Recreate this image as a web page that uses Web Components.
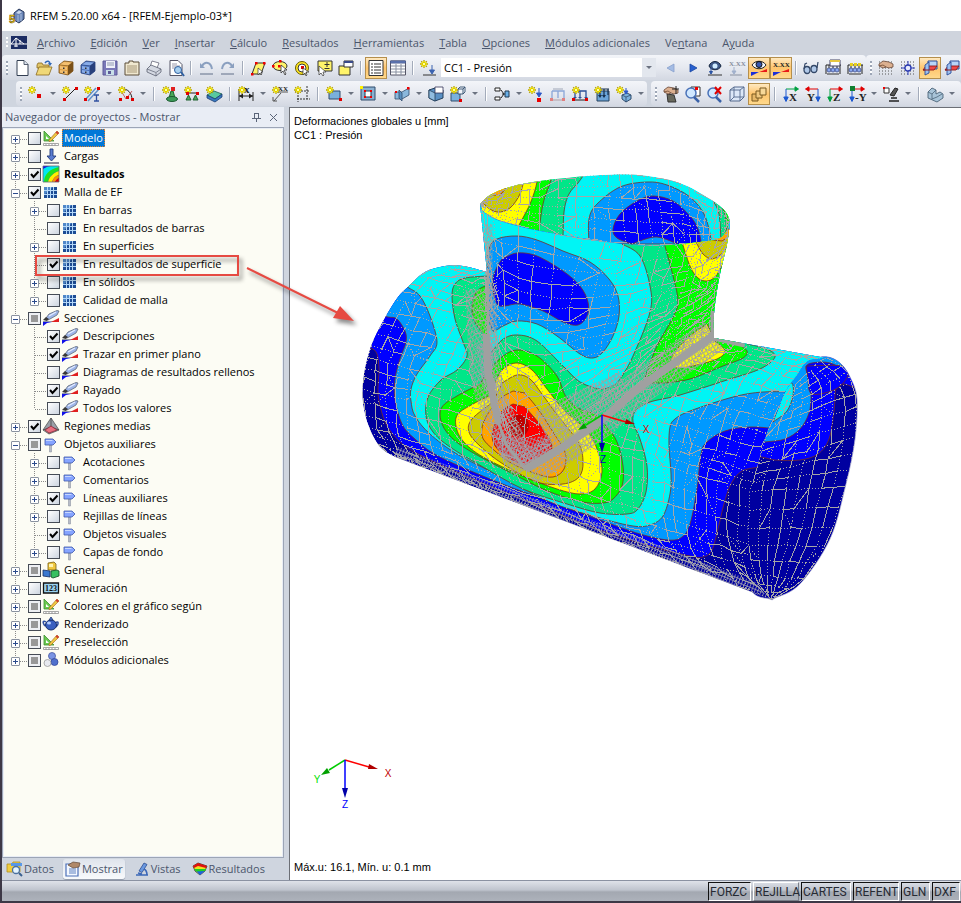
<!DOCTYPE html>
<html lang="es">
<head>
<meta charset="utf-8">
<title>RFEM 5.20.00 x64</title>
<style>
  html, body { margin: 0; min-height: 100vh; }
  body { display: flex; font: 11px/18px "Open Sans", "Noto Sans", sans-serif; color: #000; background: #3d3846; }
</style>
</head>
<body>
<rf-app></rf-app>
<script>
const define = (name, markup, ready) => {
  const tpl = document.createElement('template');
  tpl.innerHTML = markup;
  customElements.define(name, class extends HTMLElement {
    constructor() {
      super();
      this.attachShadow({ mode: 'open' }).append(tpl.content.cloneNode(true));
    }
    connectedCallback() {
      if (this.done) return;
      this.done = true;
      if (ready) ready(this, this.shadowRoot);
    }
  });
};

/* ---------- icons, drawn on a 16 x 16 field ---------- */
const p = (d, fill = 'none', stroke = 'none', w = 1) => `<path d="${d}" fill="${fill}" stroke="${stroke}" stroke-width="${w}"/>`;
const dot = (x, y, c = '#e00000', s = 3) => `<rect x="${x}" y="${y}" width="${s}" height="${s}" fill="${c}"/>`;
const star = p('M4 0v8M0 4h8M1.2 1.2l5.6 5.6M6.8 1.2L1.2 6.8', 'none', '#b8a400', 1.3) + p('M4 1v6M1 4h6M2 2l4 4M6 2L2 6', 'none', '#fff200', 1) + dot(3, 3, '#ffffa0', 2);
const word = (t, x, y, c, s = 7) => `<text x="${x}" y="${y}" fill="${c}" font-size="${s}" font-family="Liberation Serif, serif" font-weight="bold">${t}</text>`;
const hand = p('M1 4l4-3 6 1 4 2v3l-4 1-3-1-3 1-4-2z', '#dcb090', '#684838', .8) + p('M1 6l4-1 3 2', 'none', '#704830', .8);
const grid = (c = '#555') => p('M1 2h15M1 5h15M1 8h15M1 11h15M1 14h15', 'none', c, 1).replace('<path', '<path stroke-dasharray="1 2"');
const sqgrid = (a, b) => `<rect x="1" y="3" width="13" height="11" fill="${a}"/><path d="M1 3h9l-9 8z" fill="#5088c8"/>` + p('M4.5 3v11M7.5 3v11M10.5 3v11M1 6.5h13M1 10.5h13', 'none', b, 1);
const truss = () => p('M1 5h15M1 14V5M15 14V5', 'none', '#222', 1) + [3, 7, 11].map(i => `<circle cx="${i + 1}" cy="10" r="2" fill="#8aa8f0" stroke="#304080" stroke-width=".7"/>`).join('') + [3, 7, 11].map(i => p(`M${i + 1} 5v3M${i - 1} 14h4`, 'none', '#333')).join('');
const cabinet = (a, b, c) => p('M1 5l5-4 9 1v9l-5 4-9-2z', a, c, .8) + p('M1 5l9 1v9l5-4V2z', c) + p('M2 4.500L6 2l8 .500-4 3z', b) + p('M2 6l7 1v3l-7-1zM2 10l7 1v3l-7-1.500z', b) + dot(5, 7.5, '#333', 1.5) + dot(5, 11.5, '#333', 1.5);
const axes = (t, a, b) => p('M3 3h9M12 .8l3.500 2.200L12 5.200z', a, a, 1) + p('M3 3v9M.8 11L3 15.500 5.200 11z', b, b, 1) + word(t, 6, 15, '#222', 11);
const flag = p('M6.500 9h2v7h-2z', '#b8bcc8', '#808898', .5) + p('M2 3h8l3 3-3 3H2z', '#86a4ff', '#4058a8', .8) + p('M3 4h6l1 1H3z', '#c8d8ff');
const sect = p('M0 11.500h16', 'none', '#9098a8') + p('M16 8v4H8z', '#e02020') + p('M0 12h9l-5 1-4 3z', '#1010e8') + p('M3 8l3-4 8-3.500 2 .500-2 4-7 4-2 1z', '#9cb4e8', '#606878', .8) + p('M6 6l7-4', 'none', '#e4ecff', 1.2) + p('M0 10l3-3 3 2-2 2z', '#383838');
const edit = p('M1 1v10h10z', '#6ac850', '#3c9030', .8) + p('M3 6v3h3z', '#fff') + p('M6 10L14 1l2 2-8 8-2 .5z', '#f0c840', '#a06020', .6) + p('M14 1l2 2-1.500 1.500-2-2z', '#d04030') + p('M.500 13.500h15v2h-15z', '#fff', '#909090', .8) + p('M3 14v2M6 14v2M9 14v2M12 14v2', 'none', '#999', 1);
const planes = p('M6 1h9v8H6z', '#b8d4f8', '#2a4c98') + p('M1 10l3-4h11l-3 4z', '#f04848', '#901818', .9) + p('M3 5l4-3v11l-4 2z', '#9cc0f0', '#2a4c98', .9) + p('M1 10h6', 'none', '#901818');

const ICONS = {
  app: p('M5 5l5-4 5 3v7l-5 4-5-3z', '#6a86b8', '#26375c', 1) + p('M7 5l3-2.500 3 1.500-3 2z', '#c8d4ea') + p('M9 7v7M12 6v7', 'none', '#a8bcdc', 1) + `<text x="0" y="15" font-size="11" font-weight="bold" font-family="Liberation Sans" fill="#ffd21c" stroke="#5a4800" stroke-width=".5">5</text>`,
  bridge: p('M0 1h16v13H0z', '#1c2c62') + p('M0 9h16M5 3v9M5 3L0 9M5 3l8 6M9 5v4M3 11h4', 'none', '#fff', 1),
  new: p('M3 .500h7l4 4v11H3z', '#fff', '#333f52') + p('M10 .500v4h4', '#dce4f0', '#333f52', .8),
  open: p('M1 5l1-2h4l1 2h6v3H1z', '#e0c468', '#8a6a20', .8) + p('M0 15l3-8h13l-3 8z', '#f0d878', '#8a6a20', .8) + p('M9 3c2-3 5-2 5 1', 'none', '#3068b8', 1.5) + p('M12 3h4l-2 3z', '#3068b8'),
  boxb: cabinet('#d89a40', '#f4c070', '#7a5018'), boxs: cabinet('#4870b8', '#88ace8', '#28407c'),
  save: p('M1 1h14v14H1z', '#7a78b8', '#5c5a98') + p('M4 1h9v7H4z', '#f0f2fa') + p('M5 3h7M5 5h7', 'none', '#9098b0') + p('M4 10h8v5H4z', '#c8e0e8') + dot(6, 11, '#5c5a98', 3),
  report: p('M1 3h4V1h4v1h6v13H1z', '#f0e8d0', '#5a4c38') + p('M3 6h10M3 8h10M3 10h10M3 12h10', 'none', '#a89878'),
  print: p('M4 7l2-6 7 2-2 5z', '#fff', '#667', .8) + p('M1 9l4-4 10 4v3l-5 4-9-4z', '#d4d8e2', '#5a6070', .8) + p('M1 9l9 3.500L15 9M10 13v3', 'none', '#5a6070', .7),
  preview: p('M2 .500h8l4 4v11H2z', '#fff', '#556') + p('M4 4h5M4 6h8M4 8h4', 'none', '#99a') + `<circle cx="10" cy="10" r="3.500" fill="#a8d0f0" stroke="#3060a0"/>` + p('M13 12l3 4', 'none', '#3060a0', 2),
  undo: p('M2 3v5h5z', '#8ba0c0') + p('M4 6c3-5 9-4 10 3', 'none', '#8ba0c0', 2) + p('M2 14h13', 'none', '#8a94a8', 1.5),
  redo: p('M14 3v5H9z', '#8ba0c0') + p('M12 6C9 1 3 2 2 9', 'none', '#8ba0c0', 2) + p('M1 14h13', 'none', '#8a94a8', 1.5),
  sel1: p('M2 14L6 3h9l-4 11z', '#fff46a', '#333') + dot(1, 13, '#e00', 2.5) + dot(5, 2, '#e00', 2.5) + dot(13, 2, '#e00', 2.5) + p('M8 8v7l2-2 1 2 1-1-1-2h2z', '#fff', '#333', .7),
  sel2: `<ellipse cx="8" cy="6" rx="7" ry="4.500" fill="#fff46a" stroke="#333"/>` + p('M9 5v8l2-2 2 4 1-1-2-4h3z', '#fff', '#333', .8) + dot(7, 0, '#e00', 2.5) + dot(0, 5, '#e00', 2.5) + dot(6, 5, '#e00', 2.5),
  sel3: `<circle cx="8" cy="8" r="6.500" fill="#ffe820" stroke="#6a5c00"/><circle cx="8" cy="8" r="4" fill="#fff" stroke="#333"/>` + dot(7, 6) + p('M9 8v7l2-2 1 3 1-1-1-3h3z', '#fff', '#333', .7),
  sel4: p('M2 1h14v10H2z', '#fff46a', '#333') + p('M11 2v5M8.500 4.500h5M8.500 8.500h5', 'none', '#333') + p('M3 6v9l2-2 2 3 1-1-1-3h3z', '#fff', '#333', .7),
  sel5: p('M1 6h11v9H1z', '#fff46a', '#333') + p('M6 1h9v6H6z', '#fff', '#333') + p('M6 1h9v2H6z', '#3a4a8a'),
  list: p('M1 .500h14v15H1z', '#fff', '#333') + p('M6 4h7M6 7h7M6 10h7M6 13h7', 'none', '#333') + p('M3 4h2M3 7h2M3 10h2M3 13h2', 'none', '#333'),
  table: p('M.500 1h15v14H.500z', '#fff', '#556') + p('M.500 1h15v2H.500z', '#6a86c8', '#4a5c90') + p('M1 6h14M1 9h14M1 12h14M6 4v11M11 4v11', 'none', '#8890a0'),
  newload: star + p('M12 5v6M9.500 10l2.500 4 2.500-4z', '#3a62b0', '#3a62b0') + p('M3 15h13', 'none', '#333'),
  prev: p('M11 4v8L4 8z', '#a4bce4', '#88a0cc', .8), next: p('M5 4v8l7-4z', '#2860d0', '#1c48a0', .8),
  eyeload: p('M2 6c2-6 10-6 12 0-2 5-10 5-12 0z', '#3c5888', '#14243c') + `<circle cx="8" cy="6" r="2.500" fill="#d0ecff"/>` + p('M4 8v5M2.500 11.500L4 14l1.500-2.500z', '#3a72d0', '#2850a0') + p('M1 15h14', 'none', '#333'),
  xxload: word('X.XX', 0, 6, '#8890a0', 7) + p('M5 7v5M3 11l2 3 2-3z', '#a0b0cc', '#a0b0cc') + p('M1 15h12', 'none', '#8890a0'),
  eyeres: p('M1 5c3-5 11-5 14 0-3 5-11 5-14 0z', '#f4f8ff', '#222', 1) + `<circle cx="8" cy="4.500" r="3" fill="#3858b0" stroke="#111"/>` + p('M0 16V12l8 0z', '#1c30d8') + p('M8 12l8-3v3z', '#e81818'),
  xxres: word('X.XX', 0, 7, '#222', 7) + p('M0 16V12l8 0z', '#1c30d8') + p('M8 12l8-3v3z', '#e81818'),
  glasses: `<ellipse cx="4" cy="10" rx="3" ry="3.500" fill="#b0c8e8" stroke="#344868" stroke-width="1.300"/><ellipse cx="11" cy="9" rx="3" ry="3.500" fill="#b0c8e8" stroke="#344868" stroke-width="1.300"/>` + p('M1 9L2 4l2-1M14 8l1-6', 'none', '#344868', 1.2),
  tr1: truss() + p('M5 0h10v6H5z', '#fff', '#446') + p('M5 0h10v2H5z', '#e8c840'),
  tr2: truss() + dot(3, 3, '#e8d020', 3) + dot(7, 3, '#e8d020', 3) + dot(11, 3, '#e8d020', 3),
  gridhand: grid() + hand, gridpt: grid() + p('M8 1v14M1 8h14', 'none', '#3040c0') + `<circle cx="8" cy="8" r="3" fill="#e8ecff" stroke="#2838b0" stroke-width="1.300"/>`,
  plane: planes,
  node: star + dot(9, 8, '#e00000', 4),
  line: star + p('M2 14L14 2', 'none', '#222') + dot(1, 12) + dot(13, 1),
  member: p('M1 14L12 2M4 15L15 3', 'none', '#6090c8', 1.5) + star + p('M10 9h5M12.500 9v6M10 15h5', 'none', '#3050a0', 1.3) + dot(0, 12) + dot(13, 1),
  arc: p('M2 3c8-1 12 4 12 11', 'none', '#222') + p('M2 3L8 13M8 13l6-8', 'none', '#c04040', .8) + star + dot(1, 12) + dot(8, 10) + dot(13, 12),
  sup1: p('M7 12l2-7h2l2 7z', '#48a858', '#206030') + `<ellipse cx="10" cy="13" rx="5.500" ry="2.500" fill="#3c9a58" stroke="#1c5c30"/>` + star + dot(9, 1, '#e02020', 4),
  sup2: p('M2 7h13', 'none', '#222') + p('M2 14l2.500-5L7 14zM9 14l2.500-5 2.500 5z', '#48a858', '#206030') + star + dot(2, 6) + dot(12, 6),
  sup3: p('M1 9l7-4 8 3-7 5z', '#58c8a0', '#206050', .8) + p('M1 9l8 4 7-5v3l-7 5-8-4z', '#3878c0', '#1c3c70', .8) + star,
  dim: p('M1 3v12M15 6v9M1 10h14', 'none', '#222') + p('M1 10l4-2.500v5zM15 10l-4-2.500v5z', '#222') + word('x', 6, 7, '#222', 11) + star,
  dimxx: word('XX', 6, 5, '#222', 7) + p('M5 6h11M2 15L9 7M1 11v4h4', 'none', '#555') + star,
  frame: p('M4 3v13M13 0v13M1 5h14M3 13h13', 'none', '#333').replace('<path', '<path stroke-dasharray="2 1"') + star,
  surf: p('M3 5h11v8H3z', '#7ab0dc', '#304c6c') + star + dot(13, 12),
  opening: p('M1 1h14v13H1z', '#8ab0d0', '#304c6c') + p('M5 5h6v6H5z', '#fff', '#203850') + dot(4, 4, '#e00', 2) + dot(10, 4, '#e00', 2) + dot(4, 10, '#e00', 2) + dot(10, 10, '#e00', 2) + dot(0, 0, '#fff200', 3),
  inter: p('M1 6h7l7-4v7l-7 4H1z', '#8ab8dc', '#304c6c', .8) + p('M5 4v8l3 3V7z', '#5a90c0', '#304c6c', .8) + dot(13, 1, '#e00', 2.5) + dot(1, 5, '#e00', 2),
  solid: p('M1 4l6-2 8 2v8l-8 3-6-3z', '#5a90c4', '#24405c') + p('M1 4l6 3v8l-6-3z', '#90bce0', '#24405c', .8) + p('M7 1h8v6H7z', '#fff', '#335', .8),
  solids: p('M1 7h9v8H1z', '#7ab0dc', '#304c6c') + p('M8 3l2-2h5v5l-2 2H8zM8 3h5v5M13 3l2-2', '#f0f4fa', '#304c6c', .9) + star + dot(9, 13),
  conn: p('M1 2h5v3H1zM1 11h5v3H1z', '#fff', '#222') + p('M7 4l3 4-3 4M8 8h3', 'none', '#222') + p('M11 5h4v6h-4z', '#6ab0e8', '#203850'),
  pload: star + p('M11 2v7M8.500 7l2.500 4 2.500-4z', '#2c58c8', '#2c58c8') + dot(9, 12, '#e00', 4),
  lload1: p('M2 5h12v7M2 5v7M8 5v7', 'none', '#8aa6d8', 1.3) + p('M1 14h14', 'none', '#b0a0a8') + p('M3 3h10', 'none', '#a0a8b8') + dot(0, 12, '#e08080', 3) + dot(12, 12, '#e08080', 3),
  lload2: p('M3 5h11v6M3 5v6M8 5v6', 'none', '#2c5098', 1.3) + p('M1 11h4l-2 2zM6 11h4l-2 2zM12 11h4l-2 2z', '#2c5098') + p('M1 14h14', 'none', '#222') + star + dot(0, 12) + dot(13, 12),
  sload: p('M3 5h12v10H3z', '#6aa4d8', '#24405c') + p('M6 3v6M10 3v6M14 3v6M4 3h11', 'none', '#16304c', 1.2) + p('M4 9h4l-2 3zM8 9h4l-2 3z', '#16304c') + star,
  vload: p('M6 9l5-2 4 2v4l-5 3-4-3z', '#7ab0dc', '#304c6c') + p('M6 9l4 2 5-2M10 11v5', 'none', '#304c6c', .8) + p('M10 2v5M8 5l2 3 2-3z', '#2c58c8', '#2c58c8') + star,
  pan: p('M4 8l7 1 2 7H5z', '#68685c', '#333') + hand + p('M13 0v8M9 3h7', 'none', '#222'),
  zoomw: p('M6 1h9v9H6z', '#fff', '#333') + `<circle cx="6" cy="7" r="5" fill="#d0e8ff" stroke="#4a72b8" stroke-width="1.500"/>` + p('M9 11l5 5', 'none', '#3a62a8', 2.5) + dot(10, 1, '#e00', 3),
  zoomx: `<circle cx="6" cy="7" r="5" fill="#d0e8ff" stroke="#4a72b8" stroke-width="1.500"/>` + p('M9 11l5 5', 'none', '#3a62a8', 2.5) + p('M8 1l6 7M14 1L8 8', 'none', '#e00000', 2),
  cube: p('M1 4l4-3h10v10l-4 4H1z', '#dce8f8', '#54698c') + p('M1 4h10v11M11 4l4-3M5 1v10h10M5 11l-4 4', 'none', '#54698c', .9),
  boxes: p('M1 8h6v7H1z', '#e8b868', '#7a5a20') + p('M5 5h6v7H5z', '#f0c880', '#7a5a20') + p('M9 2h6v7H9z', '#f8d898', '#7a5a20'),
  axx: axes('X', '#00a040', '#1c58d0'), axy: p('M13 3H4M4 .8L.500 3 4 5.200z', '#e00000', '#e00000') + p('M13 3v9M10.800 11l2.200 4.500 2.200-4.500z', '#1c58d0', '#1c58d0') + word('Y', 2, 15, '#222', 11),
  axz: axes('Z', '#e00000', '#00a040'), axmy: axes('-Y', '#e00000', '#1c58d0') + dot(1, 0, '#108030', 5),
  views: p('M1 2h5v5H1z', '#fff', '#333') + p('M7 9L12 2l3 1-4 7z', '#555', '#222') + p('M6 15h10M8 12h6', 'none', '#222', 1.6) + dot(0, 1, '#e00', 2),
  lsolid: p('M1 6l4-4 4 2v4l4-2 3 2v4l-6 4-9-4z', '#a8c4d8', '#4c6478', .9) + p('M1 6l4 2v5M5 8l4-4M5 13l5-2 5-3', 'none', '#4c6478', .8),
  edit, sect, flag,
  load: p('M7 1h3v7h3l-4.500 5L4 8h3z', '#5a7cd0', '#223a78', .9) + p('M1 15h15', 'none', '#667', 1.5),
  result: p('M0 0h16v16H0z', '#1010f0') + p('M0 16V3C3 1 6 0 8 0h8v4C10 6 6 10 4 16z', '#00e8f0') + p('M1 16C1 9 6 3 16 1v4C10 7 6 11 5 16z', '#20e020') + p('M5 16C6 11 10 7 16 5v4c-4 1-6 4-7 7z', '#fff000') + p('M9 16c1-3 3-6 7-7v3c-2 1-3 2-4 4z', '#ff9000') + p('M12 16c1-2 2-3 4-4v4z', '#e00000') + p('M0 0h16v16H0z', 'none', '#667', .8),
  mesh: sqgrid('#1c4c94', '#b4d8f8'),
  region: p('M8 0L0 12l6 4 10-4z', '#9aa0a8', '#555', .8) + p('M8 0v9l-8 3M8 9l8 3', 'none', '#444', .8) + p('M2 12l6-4 6 4-8 3z', '#e87080', '#902838', .8),
  general: p('M5 1l6-1 2 2v6H5z', '#f0c840', '#7a6010', .8) + p('M6 2h4v3H6z', '#fff4b0') + p('M8 9l6-1 2 1v5l-6 2-2-1z', '#38c060', '#104820', .8) + p('M0 8l7 1v6l-7-1z', '#3a78d0', '#142c60', .8),
  num: p('M.500 3h15v10H.500z', '#9cd4f0', '#111', 1.3) + word('123', 2, 11, '#111', 8),
  pot: p('M3 6c-3-2-4 0-1 4M12 7c4-3 4 1 1 4', 'none', '#3050a0', 1.5) + `<ellipse cx="8" cy="9" rx="5.500" ry="5" fill="#3a60c0" stroke="#18306c"/><ellipse cx="6" cy="7" rx="2" ry="1.500" fill="#b8d0ff"/>` + p('M6 4h4L8 1z', '#5880d8', '#18306c', .8),
  mods: `<circle cx="9" cy="4" r="3.500" fill="#7a94e4" stroke="#4858a0" stroke-width=".8"/><circle cx="11.500" cy="10" r="3.500" fill="#5070cc" stroke="#34489c" stroke-width=".8"/><circle cx="4.500" cy="11" r="3.500" fill="#e8eaf0" stroke="#999" stroke-width=".8"/>`,
  tdata: p('M0 3h5l1-2h7v10H0z', '#f0cc40', '#b09020', .8) + p('M4 2h11v3H4z', '#5898e8') + `<circle cx="9" cy="9" r="3.500" fill="#e4f4ff" stroke="#4a70a0" stroke-width="1.300"/>` + p('M12 12l3 3', 'none', '#3a6090', 2),
  tshow: p('M1 3h12v12H1z', '#f4f8ff', '#4c70b8', 1.2) + p('M4 8h7M4 10h7M4 12h7', 'none', '#5c80c0') + p('M3 4l5-3 7 1-1 4-6 1z', '#b08868', '#604838', .7),
  tview: p('M5 10L10 2l3 1.500-5 8z', '#6a98e0', '#2c4c90', .8) + p('M2 14h12M13 14c0-3-1-5-3-6M4 12l4 1', 'none', '#3c68b8', 1.6),
  tres: p('M1 5l5-3 9 3-2 5-5 4-5-4z', '#f0e020', '#333', .8) + p('M1 5l5-3 9 3-1 2-8-2-4 2z', '#e01010') + p('M3 9l10 1-5 4z', '#2060e0') + p('M2 8l12 0-1 2-9 .500z', '#20d020')
};

define('rf-icon', `<style>:host{display:block;flex:none;width:16px;height:16px}svg{display:block;width:100%;height:100%;overflow:visible}</style><svg viewBox="0 0 16 16" aria-hidden="true"></svg>`,
  (el, root) => { root.querySelector('svg').innerHTML = ICONS[el.getAttribute('name')] || ''; });

/* ---------- title, menus, toolbars ---------- */
define('rf-titlebar', `<style>
  :host{display:flex;align-items:center;gap:5px;height:31px;padding:0 7px;background:#fff}
</style><rf-icon name="app"></rf-icon><span><slot></slot></span>`);

define('rf-menubar', `<style>
  :host{display:flex;align-items:center;height:24px;background:#cfd4dd;padding-left:4px}
  nav{display:flex;gap:15px;margin-left:10px}
  i{width:2px;height:12px;margin-right:3px;background:repeating-linear-gradient(#fff 0 2px,transparent 2px 4px)}
  button{border:0;background:none;padding:0;font:inherit;color:#4b566c;white-space:nowrap}
</style><i></i><rf-icon name="bridge"></rf-icon><nav></nav>`, (el, root) => {
  root.querySelector('nav').innerHTML = ['_Archivo', '_Edición', '_Ver', '_Insertar', '_Cálculo', '_Resultados', '_Herramientas', '_Tabla', '_Opciones', '_Módulos adicionales', 'Ve_ntana', 'A_yuda']
    .map(t => `<button type="button">${t.replace(/_(.)/, '<u>$1</u>')}</button>`).join('');
});

define('rf-tool', `<style>
  :host{display:block;flex:none}
  button{display:flex;align-items:center;justify-content:center;box-sizing:border-box;width:22px;height:22px;border:1px solid transparent;padding:0;background:none}
  :host([active]) button{border-color:#b58f4c;background:linear-gradient(#ffe9c0,#ffc46c 50%,#ffd98c)}
</style><button type="button"></button>`, (el, root) => {
  const name = el.getAttribute('icon'), b = root.querySelector('button');
  b.innerHTML = `<rf-icon name="${name}"></rf-icon>`;
  b.setAttribute('aria-label', name);
  b.setAttribute('aria-pressed', el.hasAttribute('active'));
});

define('rf-toolbar', `<style>
  :host{display:flex;align-items:center;flex:none;height:25px;box-sizing:border-box;padding:0 0 0 4px;border-radius:4px;background:linear-gradient(#f3f5f9,#e6e9f0 50%,#d3d8e2)}
  :host([last]){flex:1 0 auto}
  .grip{flex:none;width:2px;height:14px;margin-right:3px;background:repeating-linear-gradient(#9da6b6 0 2px,#fff 2px 4px)}
  .sep{flex:none;width:1px;height:14px;margin:0 4px 0 3px;background:#a3abba;box-shadow:1px 0 #fff}
  :host([wide]) .sep{margin:0 5px 0 4px}
  .drop{flex:none;border:0;padding:0;background:none;width:12px;height:22px;display:flex;align-items:center;justify-content:center}
  .drop::before,.combo::after{content:"";border:3px solid transparent;border-top-color:#6b7280;border-bottom:0}
  .combo{display:flex;align-items:center;width:215px;height:19px;margin:0 4px 0 2px;background:#fff;position:relative}
  .combo::after{position:absolute;right:4px}
  .combo::before{content:"";position:absolute;right:0;width:14px;height:19px;background:#e3e7ee}
  select{appearance:none;border:0;background:transparent;width:100%;padding:0 16px 0 3px;font:inherit;color:#000;position:relative;z-index:1}
</style><span class="grip"></span>`, (el, root) => {
  root.innerHTML += el.getAttribute('items').split(' ').map(n =>
    n === '|' ? '<span class="sep"></span>' :
    n === 'v' ? '<button type="button" class="drop" aria-label="Más"></button>' :
    n === 'combo' ? '<span class="combo"><select aria-label="Caso de carga"><option>CC1 - Presión</option></select></span>' :
    `<rf-tool icon="${n.replace('*', '')}"${n.endsWith('*') ? ' active' : ''}></rf-tool>`).join('');
});

/* ---------- navigator ---------- */
define('rf-tree-item', `<style>
  :host{display:flex;height:18px;align-items:center;white-space:nowrap}
  .guide{flex:none;align-self:stretch;width:19px;position:relative}
  .v::before{content:"";position:absolute;left:6px;top:0;bottom:0;width:1px;background:repeating-linear-gradient(#8a8a8a 0 1px,transparent 1px 2px)}
  .first::before{top:9px}.end::before{bottom:8px}
  .h::after{content:"";position:absolute;left:7px;right:1px;top:10px;height:1px;background:repeating-linear-gradient(90deg,#8a8a8a 0 1px,transparent 1px 2px)}
  .exp{position:absolute;z-index:1;left:2px;top:6px;width:9px;height:9px;box-sizing:border-box;border:1px solid #8a92a0;border-radius:1px;padding:0;background:linear-gradient(90deg,#2b4a8c,#2b4a8c) 1px 3px/5px 1px no-repeat,#fff}
  .plus{background:linear-gradient(#2b4a8c,#2b4a8c) 3px 1px/1px 5px no-repeat,linear-gradient(#2b4a8c,#2b4a8c) 1px 3px/5px 1px no-repeat,#fff}
  input{appearance:none;flex:none;box-sizing:border-box;width:13px;height:13px;margin:0 2px 0 0;border:1px solid #464c56;background:linear-gradient(135deg,#fff,#cdd5e0)}
  input:checked{background:url("data:image/svg+xml,%3Csvg xmlns='http://www.w3.org/2000/svg' viewBox='0 0 11 11'%3E%3Cpath d='M2 5l2.500 3L9.500 2.500' fill='none' stroke='black' stroke-width='2'/%3E%3C/svg%3E"),linear-gradient(135deg,#fff,#cdd5e0)}
  input:indeterminate{background:linear-gradient(#989898,#989898) center/7px 7px no-repeat,#eef0f4}
  label{display:flex;align-items:center;gap:3px}
  label span{padding:0 2px;line-height:18px}
  :host([selected]) label span{background:#0078d7;color:#fff;outline:1px dotted #e08030;outline-offset:-1px}
  :host([bold]) label span{font-weight:bold}
</style>`, (el, root) => {
  const a = n => el.getAttribute(n), lvl = +a('level');
  const own = `guide h v${el.hasAttribute('first') ? ' first' : ''}${el.hasAttribute('end') ? ' end' : ''}`;
  root.innerHTML += (lvl ? '<span class="guide v"></span>' : '') +
    `<span class="${own}">${a('exp') ? `<button type="button" aria-label="Expandir" class="exp ${a('exp') === '+' ? 'plus' : ''}"></button>` : ''}</span>` +
    `<input type="checkbox" id="c"><label for="c"><rf-icon name="${a('icon')}"></rf-icon><span><slot></slot></span></label>`;
  const c = root.querySelector('input');
  c.checked = a('state') === 'x';
  c.indeterminate = a('state') === 'm';
});

define('rf-tree', `<style>:host{display:block;flex:1;padding:1px 6px;overflow:hidden;background:#fcfcf4;border:1px solid #9ca5b6;box-shadow:inset 0 0 0 1px #e9edf5}</style>`, (el, root) => {
  const rows = [
    ['0', '+', '', 'edit', 'Modelo', 'selected first'], ['0', '+', '', 'load', 'Cargas'], ['0', '+', 'x', 'result', 'Resultados', 'bold'], ['0', '-', 'x', 'mesh', 'Malla de EF'],
    ['1', '+', '', 'mesh', 'En barras'], ['1', '', '', 'mesh', 'En resultados de barras'], ['1', '+', '', 'mesh', 'En superficies'], ['1', '', 'x', 'mesh', 'En resultados de superficie'], ['1', '+', '', 'mesh', 'En sólidos'], ['1', '+', '', 'mesh', 'Calidad de malla', 'end'],
    ['0', '-', 'm', 'sect', 'Secciones'], ['1', '', 'x', 'sect', 'Descripciones'], ['1', '', 'x', 'sect', 'Trazar en primer plano'], ['1', '', '', 'sect', 'Diagramas de resultados rellenos'], ['1', '', 'x', 'sect', 'Rayado'], ['1', '', '', 'sect', 'Todos los valores', 'end'],
    ['0', '+', 'x', 'region', 'Regiones medias'], ['0', '-', 'm', 'flag', 'Objetos auxiliares'],
    ['1', '+', '', 'flag', 'Acotaciones'], ['1', '+', '', 'flag', 'Comentarios'], ['1', '+', 'x', 'flag', 'Líneas auxiliares'], ['1', '+', '', 'flag', 'Rejillas de líneas'], ['1', '', 'x', 'flag', 'Objetos visuales'], ['1', '+', '', 'flag', 'Capas de fondo', 'end'],
    ['0', '+', 'm', 'general', 'General'], ['0', '+', '', 'num', 'Numeración'], ['0', '+', 'm', 'edit', 'Colores en el gráfico según'], ['0', '+', 'm', 'pot', 'Renderizado'], ['0', '+', 'm', 'edit', 'Preselección'], ['0', '+', 'm', 'mods', 'Módulos adicionales', 'end']
  ];
  root.innerHTML += rows.map(([l, e, s, i, t, f = '']) => `<rf-tree-item level="${l}" exp="${e}" state="${s}" icon="${i}" ${f}>${t}</rf-tree-item>`).join('');
});

define('rf-navigator', `<style>
  :host{display:flex;flex-direction:column;flex:none;box-sizing:border-box;width:282px;background:#cfd5df}
  header{display:flex;align-items:center;height:20px;padding:0 2px 0 3px;background:#e9edf5;color:#4b566c}
  header span{flex:1}
  header button{border:0;background:none;padding:0;width:17px;height:16px;display:flex;align-items:center;justify-content:center}
  nav{display:flex;align-items:center;height:22px;padding:0 3px;gap:7px}
  nav button{display:flex;align-items:center;gap:1px;height:20px;border:0;border-radius:3px;padding:0 2px;background:none;font:inherit;color:#4b566c}
  nav button.on{background:linear-gradient(#dfe4ec,#f8fafc);box-shadow:0 1px 1px #8f98a8}
</style>
<header><span>Navegador de proyectos - Mostrar</span>
<button type="button" aria-label="Fijar"><svg width="9" height="9"><path d="M2.500 0v5M6.500 0v5M2 .500h5M0 5.500h9M4.500 6v3" fill="none" stroke="#5a6478"/></svg></button>
<button type="button" aria-label="Cerrar"><svg width="9" height="9"><path d="M1 1l7 7M8 1L1 8" stroke="#5a6478"/></svg></button></header>
<rf-tree></rf-tree>
<nav><button type="button"><rf-icon name="tdata"></rf-icon>Datos</button><button type="button" class="on"><rf-icon name="tshow"></rf-icon>Mostrar</button><button type="button"><rf-icon name="tview"></rf-icon>Vistas</button><button type="button"><rf-icon name="tres"></rf-icon>Resultados</button></nav>`);

/* ---------- model view ---------- */
const C = { navy: '#0000a0', blue: '#0000ff', light: '#0099ff', cyan: '#00f5f5', teal: '#00e688', green: '#00ff00', yellow: '#ffff00', olive: '#cccc00', orange: '#ffa500', red: '#ff0000', dark: '#c00000' };
const pts = s => s.trim().split(/\s+/).map(q => q.split(',').map(Number));
/* smooth curve through the points; "|" separates runs joined by straight corners */
const curve = s => {
  let d = '';
  s.split('|').forEach((run, k) => {
    const a = pts(run);
    d += (k ? 'L' : 'M') + a[0];
    for (let i = 0; i < a.length - 1; i++) {
      const p0 = a[i - 1] || a[i], p1 = a[i], p2 = a[i + 1], p3 = a[i + 2] || p2;
      const f = (u, v, w, sgn) => (u + sgn * (w - v) / 6).toFixed(1);
      d += `C${f(p1[0], p0[0], p2[0], 1)},${f(p1[1], p0[1], p2[1], 1)} ${f(p2[0], p1[0], p3[0], -1)},${f(p2[1], p1[1], p3[1], -1)} ${p2}`;
    }
  });
  return d + 'Z';
};
const area = (c, s) => `<path d="${curve(s)}" fill="${C[c]}" stroke="#7a2c20" stroke-width=".8"/>`;
const at = (a, t) => {
  const n = a.length - 1, i = Math.min(n - 1, Math.floor(t * n)), f = t * n - i;
  return [a[i][0] + (a[i + 1][0] - a[i][0]) * f, a[i][1] + (a[i + 1][1] - a[i][1]) * f];
};
let seed = 7;
const rnd = () => (seed = (seed * 16807) % 2147483647) / 2147483647 - .5;
/* finite-element grid between two profile curves; part of the edges are dotted */
const net = (A, B, nu, nv, jit, diag, bend = 1) => {
  const a = pts(A), b = pts(B), g = [];
  for (let i = 0; i <= nu; i++) {
    g.push([]);
    const s = Math.pow(i / nu, bend);
    for (let j = 0; j <= nv; j++) {
      const p1 = at(a, j / nv), p2 = at(b, j / nv);
      g[i].push([(p1[0] + (p2[0] - p1[0]) * s + rnd() * jit).toFixed(1), (p1[1] + (p2[1] - p1[1]) * s + rnd() * jit).toFixed(1)]);
    }
  }
  const d = ['', ''];
  const put = (u, v) => { d[rnd() > -.05 ? 1 : 0] += `M${u}L${v}`; };
  for (let i = 0; i <= nu; i++) for (let j = 0; j <= nv; j++) {
    if (i < nu) put(g[i][j], g[i + 1][j]);
    if (j < nv) put(g[i][j], g[i][j + 1]);
    if (i < nu && j < nv && rnd() + .5 < diag) rnd() > 0 ? put(g[i][j], g[i + 1][j + 1]) : put(g[i + 1][j], g[i][j + 1]);
  }
  return `<g fill="none" stroke="#a6a6a6" shape-rendering="crispEdges"><path d="${d[0]}"/><path d="${d[1]}" stroke-dasharray="1 2"/></g>`;
};
const tri = (x, y) => `<g stroke-width="1.500"><path d="M${x} ${y}l24 7" stroke="#f00"/><path d="M${x} ${y}l-16 10" stroke="#0c0"/><path d="M${x} ${y}v28" stroke="#00f"/></g>
  <path d="M${x + 33} ${y + 9}l-9-5-1 5z" fill="#b00000"/><path d="M${x - 24} ${y + 15}l9-2-3-5z" fill="#00a000"/><path d="M${x} ${y + 38}l-3-10h6z" fill="#0000a8"/>`;

const FRONT = '487,273 463,267 445,267 425,273 409,287 398,298 386,317 374,340 367,360 363,382 363,405 369,428 380,448 395,458|770,600 755,580 748,540 750,490 757,468 768,430 777,413 785,393 797,376 808,362 826,359|714,339 714,315 719,280 727,245 730,224|730,222 722,238 700,243 650,247 600,242 540,232 500,222 484,213 480,205|487,273';
const END = '800,364 815,359 828,358 840,364 850,378 857,400 855,440 846,485 830,540 800,585 775,599 770,600 750,590 735,540 740,460 770,410';
const RIM = '480,205 490,196 510,188 540,182 600,176 640,176 680,184 710,200 725,212 730,222|730,222 722,238 700,243 650,247 600,242 540,232 500,222 484,213 480,205';

define('rf-viewport', `<style>
  :host{display:flex;flex-direction:column;justify-content:space-between;flex:1;min-width:0;box-sizing:border-box;position:relative;overflow:hidden;background:#fff;border:solid #6c6f76;border-width:1px 0 0 1px;padding:6px 4px;font:11px/14px "Liberation Sans",Arial,sans-serif}
  svg{position:absolute;left:0;top:0;width:672px;height:771px}
  p{margin:0;position:relative}
</style><p>Deformaciones globales u [mm]<br>CC1 : Presión</p><svg viewBox="290 109 672 771" role="img" aria-label="Modelo"></svg><p>Máx.u: 16.1, Mín. u: 0.1 mm</p>`, (el, root) => {
  const seamR = 'M526 470 560 450 603 420 640 388 680 360 714 336';
  root.querySelector('svg').innerHTML = `
  <defs>
    <clipPath id="front"><path d="${curve(FRONT)}"/></clipPath>
    <clipPath id="end"><path d="${curve(END)}"/></clipPath>
    <clipPath id="rim"><path d="${curve(RIM)}"/></clipPath>
    <clipPath id="low"><path d="M350 260H487L489 375 503 440 526 470 560 450 603 420 640 388 714 336 860 350V610H350z"/></clipPath>
    <pattern id="fine" width="4" height="4" patternUnits="userSpaceOnUse" patternTransform="rotate(-32)"><path d="M0 .500h4M.500 0v4M0 4l4-4" stroke="#a0a0a0" stroke-width=".8"/></pattern>
    <pattern id="fine2" width="3" height="4" patternUnits="userSpaceOnUse" patternTransform="rotate(22)"><path d="M0 .500h3M.500 0v4" stroke="#9c9cb0" stroke-width=".8"/></pattern>
  </defs>
  <g clip-path="url(#end)">
    <path d="${curve(END)}" fill="${C.navy}"/>
    ${area('blue', '740,466 758,458 775,461 800,461 818,455 829,440 834,412 836,390 843,385 853,388|870,380 840,340 760,340')}
    ${area('light', '740,446 765,443 785,440 800,430 809,414 811,395 808,378 806,368 812,364 830,364 850,374|860,360 840,340 760,340')}
    ${area('blue', '806,367 842,367 848,376 836,390 812,395 808,380')}
    ${area('cyan', '785,390 792,384 793,396 787,412 773,423')}
    ${net('785,393 777,413 768,430 757,468 750,490 747,540 755,580 770,600', '826,358 846,370 856,400 855,440 846,485 830,540 800,585 772,600', 8, 19, 2, .1)}
  </g>
  <path d="${curve(END)}" fill="none" stroke="#8080c0" stroke-width=".6"/>
  <g clip-path="url(#rim)">
    <path d="${curve(RIM)}" fill="${C.cyan}"/>
    ${area('teal', '588,170 578,184 569,195 564,213 563,245|470,245 470,170')}
    ${area('green', '551,170 551,181 543,205 538,240|470,240 470,170')}
    ${area('yellow', '538,170 537,183 530,205 514,235|470,235 470,170')}
    ${area('olive', '480,195 485,206 497,213 510,209 520,195 524,180|480,170')}
    ${area('orange', '488,192 494,196 501,195 508,185|490,180')}
    ${area('light', '589,245 589,220 597,205 620,188 647,183 667,186 690,198 705,217 712,245')}
    ${area('blue', '632,245 617,239 613,230 620,215 637,202 653,197 673,202 690,217 698,230 702,247|680,246 657,238 637,243')}
    ${area('teal', '712,200 719,215 721,245|740,245 740,190')}
    ${area('green', '722,208 726,220 726,240|740,240 740,208')}
    ${net('480,205 490,196 510,188 540,182 600,176 640,176 680,184 710,200 725,212 730,222', '480,205 484,213 500,222 540,232 600,242 650,247 685,245 705,243 722,238 730,222', 6, 30, 2, .3)}
  </g>
  <g clip-path="url(#front)">
    <path d="${curve(FRONT)}" fill="${C.navy}"/>
    ${area('blue', '360,346 371,349 377,355 379,370 378,388 379,402 386,425 400,443 420,456 450,470 500,491 550,511 600,531 650,547 690,557 703,558 712,551 718,530 724,505 731,485 742,472 760,468|880,468 880,150 360,150')}
    ${area('light', '375,315 388,318 397,320 405,332 406,343 400,360 395,380 395,400 402,425 415,440 440,458 500,484 560,506 600,521 640,535 668,541 682,538 690,525 697,490 701,455 707,443 725,432 750,428 780,430|880,430 880,150 375,150')}
    ${area('cyan', '400,284 409,289 420,297 430,317 437,343 430,357 417,375 411,390 411,402 415,417 430,435 457,455 500,477 550,503 600,519 633,527 650,526 663,517 670,495 671,475 669,447 670,428 675,420 690,412 733,398 763,393 795,393|880,393 880,150 400,150')}
    ${area('teal', '488,277 465,279 455,285 452,297 455,320 463,343 467,357 457,371 441,381 428,398 426,417 433,433 450,448 483,468 523,490 567,505 600,514 627,515 638,510 646,493 647,467 640,440 633,423 636,411 650,403 680,396 727,381 760,370 775,358 767,350 747,345|747,320 740,230|622,245 640,257 650,287 650,313 633,357 620,380 612,387 600,390 580,383 563,367 537,342 517,336 502,341 488,358')}
    ${area('green', '488,372 502,358 517,351 537,357 557,377 566,398 580,410 595,415 607,428 617,443 623,467 622,487 613,500 603,504 583,503 550,493 517,477 470,452 450,437 441,422 442,408 457,397 480,385')}
    ${area('green', '663,240 673,277 678,303 672,320 657,347 647,373 643,384|665,384 690,380 723,367 743,359 747,352 738,345|740,330 740,230')}
    ${area('green', '488,286 477,292 472,307 475,323 488,340')}
    ${area('yellow', '491,396 473,405 458,415 456,427 463,442 483,458 523,477 557,490 580,495 595,490 602,473 598,453 588,433 563,410 547,390 532,371 517,364 503,370 495,384')}
    ${area('yellow', '707,325 690,337 675,353 671,365 678,369 697,366 717,360 725,352 715,342')}
    ${area('yellow', '681,240 690,267 698,279 707,282 715,278 722,267|740,230')}
    ${area('olive', '493,403 472,420 469,433 480,447 503,465 537,483 563,485 579,478 583,463 578,443 555,413 542,395 530,380 517,376 502,384')}
    ${area('olive', '696,243 703,255 712,260 722,255|740,230')}
    ${area('orange', '513,392 500,400 486,418 482,437 495,452 513,465 537,475 553,478 564,470 565,453 553,433 538,410 525,394')}
    ${area('orange', '712,241 722,242|740,230 722,230')}
    ${area('red', '513,405 502,412 493,430 494,445 507,458 527,467 545,462 552,447 541,427 525,408')}
    <ellipse cx="519" cy="427" rx="10" ry="11" fill="${C.dark}"/>
    ${area('light', '487,273 489,250 497,240 517,237 537,241 563,252 590,263 609,280 618,297 619,317 613,337 603,353 593,359 580,355 557,337 537,325 517,322 503,327 493,332 489,320')}
    ${area('blue', '502,260 517,254 537,257 563,272 580,287 588,303 587,317 578,326 563,323 543,312 520,305 505,307 498,306 494,297 493,280 497,268 502,260')}
    ${net('480,205 484,213 500,222 540,232 600,242 650,247 685,245 705,243 722,238 730,222', '489,375 495,400 510,450 526,470 560,448 600,420 640,386 670,365 695,350 714,337', 20, 22, 3, .35, .8)}
    <g clip-path="url(#low)">
      ${net('487,266 445,266 415,278 395,300 378,332 366,362 363,390 366,425 378,447 395,458', '826,359 808,362 797,376 785,393 768,430 757,468 750,490 748,540 755,575 770,600', 36, 24, 3, .2)}
    </g>
    <g fill="none" stroke-linejoin="round">
      <path d="M480 290C484 335 480 375 495 408S512 450 526 470" stroke="url(#fine)" stroke-width="30"/>
      <path d="M476 345 492 345 496 390 484 392z" fill="url(#fine2)"/>
      <path d="${seamR}" stroke="url(#fine)" stroke-width="34"/>
      <path d="M540 425 580 405 625 385" stroke="url(#fine)" stroke-width="26"/>
      <path d="M495 430Q515 445 550 435L548 462 527 472 500 458z" fill="url(#fine2)"/>
      <path d="M395 455 770 597" stroke="url(#fine2)" stroke-width="16"/>
      <path d="M489 225V330" stroke="url(#fine)" stroke-width="7"/>
      <path d="M488 270V340" stroke="#a0a0a0" stroke-width="2"/>
      <path d="M486 335 488 380" stroke="#a0a0a0" stroke-width="7"/>
      <path d="M489 375 494 405 499 425" stroke="#a0a0a0" stroke-width="7"/>
      <path d="M499 425 506 445 526 471" stroke="#a0a0a0" stroke-width="3"/>
      <path d="${seamR}" stroke="#a0a0a0" stroke-width="8"/>
      <path d="M714 312V338L745 345" stroke="#a0a0a0" stroke-width="7"/>
    </g>
  </g>
  ${tri(602, 416)}${tri(345, 761)}
  <g font-family="Liberation Sans, Arial, sans-serif" font-size="10" text-anchor="middle">
    <text x="646" y="434" fill="#e00000">X</text><text x="603" y="464" fill="#0000c0">Z</text>
    <text x="388" y="778" fill="#c00000">X</text><text x="317" y="784" fill="#00e000">Y</text><text x="345" y="809" fill="#0000ff">Z</text>
  </g>`;
});

define('rf-statusbar', `<style>
  :host{display:flex;justify-content:flex-end;align-items:center;gap:2px;height:21px;box-sizing:border-box;padding-right:1px;border-top:1px solid #8b92a2;background:linear-gradient(#dfe2e9,#bfc4ce 45%,#a3a8b1 55%,#adb2bb);font:12px/16px Roboto,"Liberation Sans",sans-serif;color:#262a33}
  span{box-sizing:border-box;flex:none;height:19px;padding:1px 0 0 1px;white-space:nowrap;border:1px solid;border-color:#111 #fff #fff #111}
  .up{border-color:#fff #7a7f88 #7a7f88 #fff}
</style><span style="width:43px">FORZC</span><span class="up" style="width:46px">REJILLA</span><span style="width:50px">CARTES</span><span style="width:46px">REFENT</span><span style="width:29px">GLN</span><span style="width:28px">DXF</span>`);

/* marker frame and arrow lying over the window */
define('rf-callout', `<style>:host{position:absolute;left:28px;top:250px;pointer-events:none}svg{display:block;filter:drop-shadow(3px 4px 2px rgba(0,0,0,.45))}</style>
<svg width="340" height="90"><rect x="6" y="6" width="202" height="19" fill="none" stroke="#e64a42" stroke-width="2"/><path d="M217 18L308 63" stroke="#e64a42" stroke-width="2"/><path d="M324 71L303 68L310 56z" fill="#e64a42"/></svg>`);

define('rf-app', `<style>
  :host{display:flex;flex-direction:column;flex:1;min-width:0;margin:0 0 2px 2px;position:relative;background:#cfd5df;overflow:hidden}
  .row{display:flex;height:26px;overflow:hidden;flex:none}
  .row.two{gap:4px;padding-left:14px}
  main{display:flex;flex:1;gap:5px}
</style>
<rf-titlebar>RFEM 5.20.00 x64 - [RFEM-Ejemplo-03*]</rf-titlebar>
<rf-menubar></rf-menubar>
<div class="row"><rf-toolbar items="new open boxb boxs save report print preview | undo redo | sel1 sel2 sel3 sel4 sel5 | list* table | newload combo prev next eyeload xxload eyeres* xxres* | glasses tr1 tr2"></rf-toolbar><rf-toolbar last items="gridhand gridpt plane* plane"></rf-toolbar></div>
<div class="row two"><rf-toolbar wide items="node v line member v arc v | sup1 sup2 sup3 | dim v dimxx frame | surf v opening v inter v solid solids v | conn v pload lload1 lload2 sload vload v"></rf-toolbar><rf-toolbar wide last items="pan zoomw zoomx cube boxes* | axx axy axz axmy v views v | lsolid v"></rf-toolbar></div>
<main><rf-navigator></rf-navigator><rf-viewport></rf-viewport></main>
<rf-statusbar></rf-statusbar>
<rf-callout></rf-callout>`);
</script>
</body>
</html>
